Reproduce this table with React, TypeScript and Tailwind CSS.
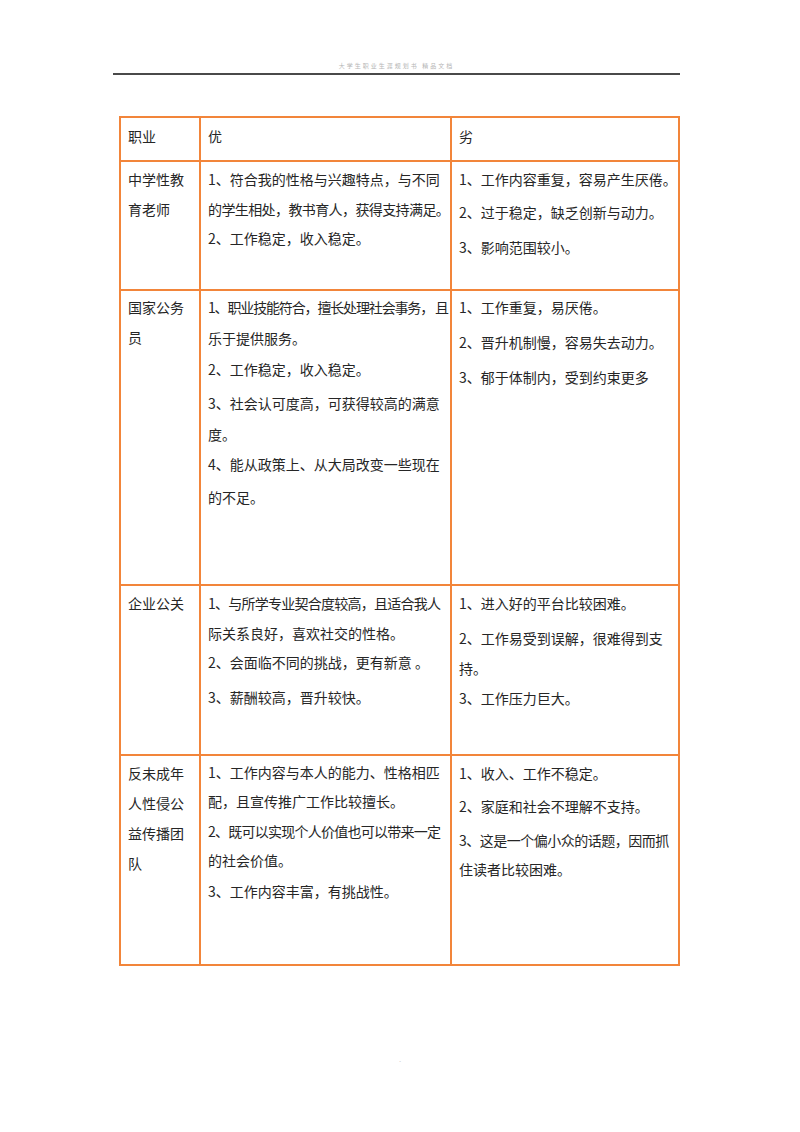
import React from 'react';

type Line = string | [string, string];
type Para = { lines: Line[]; cls: string };
type Row = { h: string; pt: string; cells: Para[][] };

// some lines are squeezed in the original (word-style punctuation compression)
const rows: Row[] = [
  {
    h: 'h-[129px]',
    pt: 'pt-[2px]',
    cells: [
      [{ lines: ['中学性教', '育老师'], cls: 'leading-[30px]' }],
      [
        {
          lines: ['1、符合我的性格与兴趣特点，与不同', ['的学生相处，教书育人，获得支持满足。', 'tracking-[-0.6px]']],
          cls: 'leading-[30px]',
        },
        { lines: ['2、工作稳定，收入稳定。'], cls: 'leading-[29px]' },
      ],
      [
        { lines: ['1、工作内容重复，容易产生厌倦。'], cls: 'leading-[30px]' },
        { lines: ['2、过于稳定，缺乏创新与动力。'], cls: 'leading-[30px] mt-[3px]' },
        { lines: ['3、影响范围较小。'], cls: 'leading-[30px] mt-[5px]' },
      ],
    ],
  },
  {
    h: 'h-[295px]',
    pt: 'pt-[1px]',
    cells: [
      [{ lines: ['国家公务', '员'], cls: 'leading-[30px]' }],
      [
        {
          lines: [['1、职业技能符合，擅长处理社会事务， 且', 'tracking-[-1.15px]'], '乐于提供服务。'],
          cls: 'leading-[31px]',
        },
        { lines: ['2、工作稳定，收入稳定。'], cls: 'leading-[30px]' },
        { lines: ['3、社会认可度高，可获得较高的满意', '度。'], cls: 'leading-[31px] mt-[4px]' },
        { lines: ['4、能从政策上、从大局改变一些现在', '的不足。'], cls: 'leading-[33px] -mt-[2px]' },
      ],
      [
        { lines: ['1、工作重复，易厌倦。'], cls: 'leading-[30px]' },
        { lines: ['2、晋升机制慢，容易失去动力。'], cls: 'leading-[30px] mt-[5px]' },
        { lines: ['3、郁于体制内，受到约束更多'], cls: 'leading-[30px] mt-[5px]' },
      ],
    ],
  },
  {
    h: 'h-[170px]',
    pt: 'pt-[2px]',
    cells: [
      [{ lines: ['企业公关'], cls: 'leading-[30px]' }],
      [
        {
          lines: [['1、与所学专业契合度较高，且适合我人', 'tracking-[-0.75px]'], '际关系良好，喜欢社交的性格。'],
          cls: 'leading-[30px]',
        },
        { lines: ['2、会面临不同的挑战，更有新意 。'], cls: 'leading-[29px]' },
        { lines: ['3、薪酬较高，晋升较快。'], cls: 'leading-[30px] mt-[5px]' },
      ],
      [
        { lines: ['1、进入好的平台比较困难。'], cls: 'leading-[30px]' },
        { lines: ['2、工作易受到误解，很难得到支', '持。'], cls: 'leading-[30px] mt-[5px]' },
        { lines: ['3、工作压力巨大。'], cls: 'leading-[30px]' },
      ],
    ],
  },
  {
    h: 'h-[210px]',
    pt: 'pt-[2px]',
    cells: [
      [{ lines: ['反未成年', '人性侵公', '益传播团', '队'], cls: 'leading-[30px]' }],
      [
        { lines: ['1、工作内容与本人的能力、性格相匹', '配，且宣传推广工作比较擅长。'], cls: 'leading-[29px]' },
        {
          lines: [['2、既可以实现个人价值也可以带来一定', 'tracking-[-0.75px]'], '的社会价值。'],
          cls: 'leading-[29px] mt-[1px]',
        },
        { lines: ['3、工作内容丰富，有挑战性。'], cls: 'leading-[30px] mt-[1px]' },
      ],
      [
        { lines: ['1、收入、工作不稳定。'], cls: 'leading-[30px]' },
        { lines: ['2、家庭和社会不理解不支持。'], cls: 'leading-[30px] mt-[3px]' },
        {
          lines: [['3、这是一个偏小众的话题，因而抓', 'tracking-[-0.5px]'], '住读者比较困难。'],
          cls: 'leading-[29px] mt-[5px]',
        },
      ],
    ],
  },
];

const colCls = [
  'w-[78px]',
  'w-[251px] border-l-2 border-[#f2853a]',
  'w-[228px] border-l-2 border-[#f2853a]',
];

function Cell({ paras, idx, pt }: { paras: Para[]; idx: number; pt: string }) {
  return (
    <div className={`${colCls[idx]} ${pt} pl-[7px]`}>
      {paras.map((p, i) => (
        <div key={i} className={`${p.cls} whitespace-nowrap`}>
          {p.lines.map((l, j) =>
            typeof l === 'string' ? <div key={j}>{l}</div> : <div key={j} className={l[1]}>{l[0]}</div>
          )}
        </div>
      ))}
    </div>
  );
}

export default function App() {
  return (
    <div
      className="w-[800px] h-[1132px] bg-white text-[14px] text-[#262626]"
      style={{ fontFamily: '"Noto Sans CJK SC", "Noto Sans", sans-serif' }}
    >
      <div className="pt-[60px] ml-[113px] w-[567px]">
        <div className="h-[11px] text-center text-[6px] leading-[11px] tracking-[2px] text-[#b5b5b5]">
          大学生职业生涯规划书 精品文档
        </div>
        <div className="mt-[2px] h-[2px] bg-[#4a4a4a]" />
      </div>

      <div className="mt-[41px] ml-[119px] w-[561px] border-2 border-[#f2853a]">
        <div className="flex h-[42px]">
          <Cell idx={0} pt="pt-[3px]" paras={[{ lines: ['职业'], cls: 'leading-[30px]' }]} />
          <Cell idx={1} pt="pt-[3px]" paras={[{ lines: ['优'], cls: 'leading-[30px]' }]} />
          <Cell idx={2} pt="pt-[3px]" paras={[{ lines: ['劣'], cls: 'leading-[30px]' }]} />
        </div>
        {rows.map((r, i) => (
          <div key={i} className={`flex ${r.h} border-t-2 border-[#f2853a]`}>
            {r.cells.map((c, k) => (
              <Cell key={k} idx={k} pt={r.pt} paras={c} />
            ))}
          </div>
        ))}
      </div>

      <div className="mt-[92px] text-center text-[5px] leading-[6px] text-[#999]">-</div>
    </div>
  );
}
